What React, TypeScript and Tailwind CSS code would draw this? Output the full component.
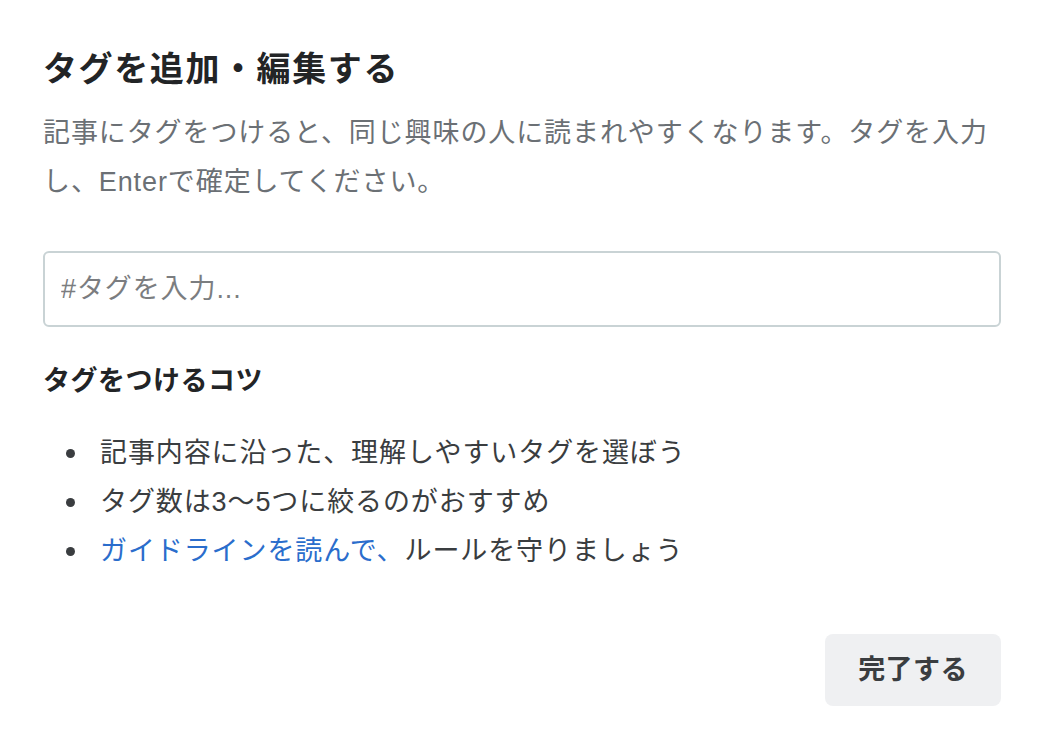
import React from "react";

export default function App() {
  const font = { fontFamily: '"Liberation Sans", "Noto Sans CJK JP", sans-serif' };
  return (
    <div className="w-[1044px] h-[750px] bg-white px-[43px] pt-[48px]" style={font}>
      <h1 className="text-[34px] leading-[42px] font-bold tracking-[1.6px] text-[#222426]">
        タグを追加・編集する
      </h1>
      <p className="mt-[19px] text-[27px] leading-[49px] tracking-[0.9px] text-[#6b7075]">
        記事にタグをつけると、同じ興味の人に読まれやすくなります。タグを入力し、Enterで確定してください。
      </p>
      <div className="mt-[44px] h-[76px] rounded-[6px] border-2 border-[#c9d3d5] flex items-center px-[16px]">
        <input
          className="w-full outline-none bg-transparent text-[27px] tracking-[0.9px] placeholder:text-[#7b7d80] text-[#333]"
          placeholder="#タグを入力..."
          style={font}
        />
      </div>
      <h2 className="mt-[30px] text-[27px] leading-[49px] font-bold tracking-[0.5px] text-[#222426]">
        タグをつけるコツ
      </h2>
      <ul className="mt-[23px] text-[27px] leading-[49px] tracking-[0.9px] text-[#3a3d40]">
        <li className="flex items-center">
          <span className="w-[9px] h-[9px] rounded-full bg-[#3a3d40] ml-[23px] mr-[25px]" />
          <span>記事内容に沿った、理解しやすいタグを選ぼう</span>
        </li>
        <li className="flex items-center">
          <span className="w-[9px] h-[9px] rounded-full bg-[#3a3d40] ml-[23px] mr-[25px]" />
          <span>タグ数は3〜5つに絞るのがおすすめ</span>
        </li>
        <li className="flex items-center">
          <span className="w-[9px] h-[9px] rounded-full bg-[#3a3d40] ml-[23px] mr-[25px]" />
          <span>
            <a className="text-[#2a6dcc]">ガイドラインを読んで、</a>ルールを守りましょう
          </span>
        </li>
      </ul>
      <div className="mt-[58px] flex justify-end">
        <button className="w-[176px] h-[72px] rounded-[8px] bg-[#eff0f2] text-[27px] font-bold tracking-[0.4px] text-[#3a3d40]" style={font}>
          完了する
        </button>
      </div>
    </div>
  );
}
